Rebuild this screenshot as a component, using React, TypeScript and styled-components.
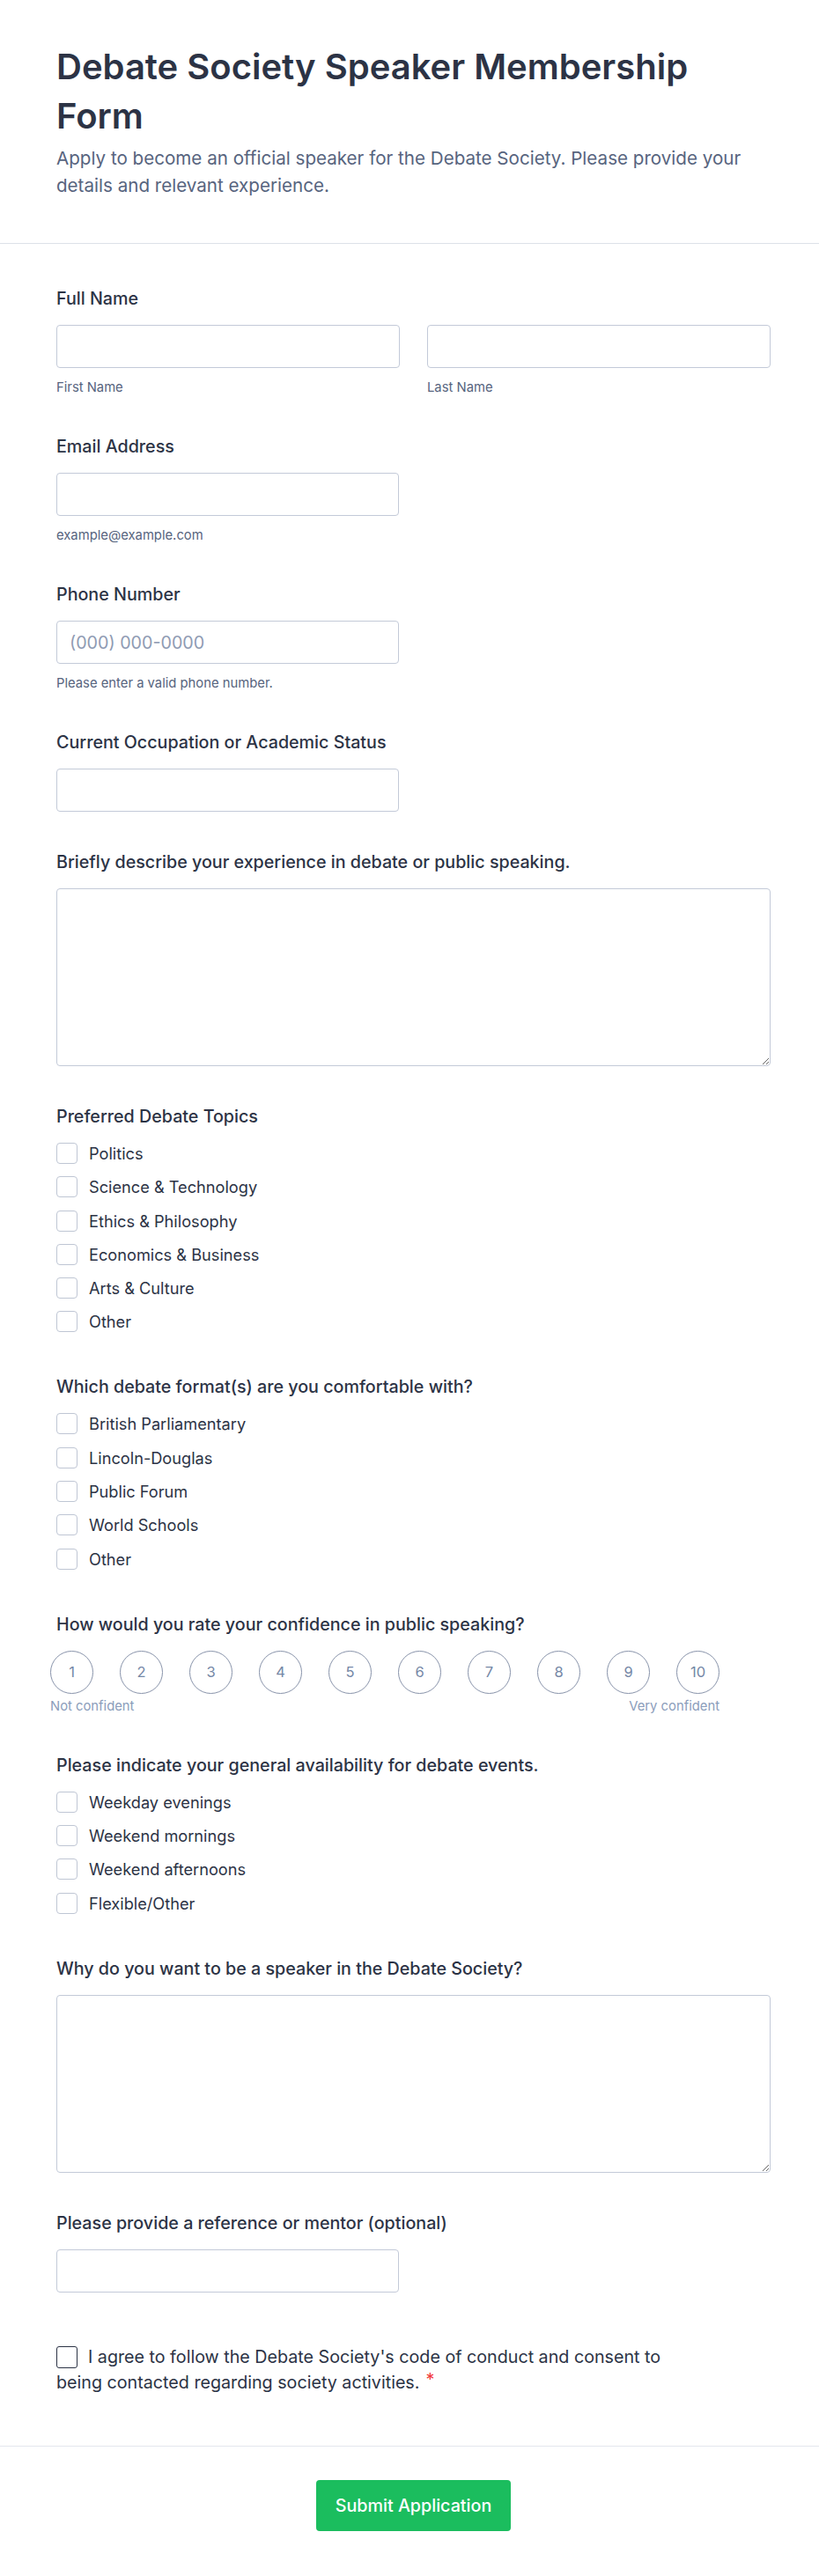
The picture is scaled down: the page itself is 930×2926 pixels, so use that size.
import React from "react";
import styled, { createGlobalStyle } from "styled-components";

const Global = createGlobalStyle`
  * { box-sizing: border-box; }
  html, body { margin: 0; padding: 0; background: #ffffff; }
  body {
    font-family: Inter, "Noto Sans", "Liberation Sans", sans-serif;
    color: #2c3345;
  }
`;

const Page = styled.div`
  width: 930px;
  display: flex;
  flex-direction: column;
  background: #ffffff;
`;

const Header = styled.header`
  padding: 48px 55px 50px 64px;
  border-bottom: 1px solid #dde1e8;
`;

const Title = styled.h1`
  margin: 0;
  font-size: 40px;
  line-height: 56px;
  font-weight: 600;
  color: #2c3345;
`;

const Subtitle = styled.p`
  margin: 4px 0 0;
  font-size: 20.6px;
  line-height: 31px;
  color: #57647e;
`;

const Body = styled.div`
  padding: 49px 55px 58px 64px;
  display: flex;
  flex-direction: column;
`;

const Field = styled.div<{ $extra?: number }>`
  margin-bottom: ${(p) => 44 + (p.$extra || 0)}px;
`;

const Label = styled.label`
  display: block;
  font-size: 19.7px;
  line-height: 27px;
  font-weight: 500;
  color: #2c3345;
  margin-bottom: 16px;
`;

const Pair = styled.div`
  display: grid;
  grid-template-columns: 1fr 1fr;
  column-gap: 31px;
`;

const TextInput = styled.input<{ $full?: boolean }>`
  display: block;
  width: ${(p) => (p.$full ? "100%" : "389px")};
  height: 49px;
  border: 1px solid #c3cad8;
  border-radius: 4px;
  padding: 0 14px;
  font-family: inherit;
  font-size: 19.7px;
  color: #2c3345;
  background: #fff;
  outline: none;
  &::placeholder {
    color: #8f9bb3;
  }
`;

const TextArea = styled.textarea`
  display: block;
  width: 100%;
  height: 202px;
  border: 1px solid #c3cad8;
  border-radius: 4px;
  padding: 10px 14px;
  font-family: inherit;
  font-size: 19.7px;
  resize: vertical;
  outline: none;
  background: #fff;
`;

const SubLabel = styled.div`
  margin-top: 12px;
  font-size: 14.8px;
  line-height: 20px;
  color: #57647e;
`;

const CheckList = styled.div`
  display: flex;
  flex-direction: column;
  gap: 14.3px;
  margin-top: 2px;
`;

const CheckItem = styled.label`
  display: flex;
  align-items: center;
  gap: 13px;
  font-size: 18.2px;
  line-height: 24px;
  color: #2c3345;
`;

const Box = styled.input.attrs({ type: "checkbox" })`
  appearance: none;
  -webkit-appearance: none;
  margin: 0;
  width: 24px;
  height: 24px;
  flex: none;
  border: 1px solid #bfc6d4;
  border-radius: 4px;
  background: #fff;
`;

const Rating = styled.div`
  margin-left: -7px;
  width: 760px;
`;

const Circles = styled.div`
  display: flex;
  gap: 30px;
`;

const Circle = styled.button`
  width: 49px;
  height: 49px;
  border-radius: 50%;
  border: 1px solid #8792a9;
  background: #fff;
  padding: 0;
  font-family: inherit;
  font-size: 16.5px;
  color: #7587a6;
  display: flex;
  align-items: center;
  justify-content: center;
`;

const Scale = styled.div`
  display: flex;
  justify-content: space-between;
  margin-top: 4px;
  font-size: 14.8px;
  line-height: 20px;
  color: #8b9dbb;
`;

const Agree = styled.p`
  margin: 16px 0 0;
  max-width: 720px;
  font-size: 19.7px;
  line-height: 26.7px;
  color: #2c3345;
`;

const AgreeBox = styled.input.attrs({ type: "checkbox" })`
  appearance: none;
  -webkit-appearance: none;
  margin: 0 12px 0 0;
  width: 24px;
  height: 25px;
  border: 1.5px solid #2c3345;
  border-radius: 3px;
  background: #fff;
  vertical-align: -6px;
`;

const Required = styled.span`
  color: #f23a3c;
  margin-left: 7px;
  vertical-align: 3px;
`;

const Footer = styled.footer`
  border-top: 1px solid #e3e6ed;
  padding: 38px 55px 50px 64px;
  display: flex;
  justify-content: center;
`;

const Submit = styled.button`
  width: 221px;
  height: 58px;
  border: none;
  border-radius: 4px;
  background: #1bbd5e;
  color: #ffffff;
  font-family: inherit;
  font-size: 19.7px;
  font-weight: 500;
`;

const topics = [
  "Politics",
  "Science & Technology",
  "Ethics & Philosophy",
  "Economics & Business",
  "Arts & Culture",
  "Other",
];

const formats = [
  "British Parliamentary",
  "Lincoln-Douglas",
  "Public Forum",
  "World Schools",
  "Other",
];

const availability = [
  "Weekday evenings",
  "Weekend mornings",
  "Weekend afternoons",
  "Flexible/Other",
];

function CheckGroup({ items }: { items: string[] }) {
  return (
    <CheckList>
      {items.map((t) => (
        <CheckItem key={t}>
          <Box />
          <span>{t}</span>
        </CheckItem>
      ))}
    </CheckList>
  );
}

export default function App() {
  return (
    <Page>
      <Global />
      <Header>
        <Title>Debate Society Speaker Membership Form</Title>
        <Subtitle>
          Apply to become an official speaker for the Debate Society. Please
          provide your details and relevant experience.
        </Subtitle>
      </Header>
      <Body>
        <Field>
          <Label>Full Name</Label>
          <Pair>
            <div>
              <TextInput $full />
              <SubLabel>First Name</SubLabel>
            </div>
            <div>
              <TextInput $full />
              <SubLabel>Last Name</SubLabel>
            </div>
          </Pair>
        </Field>
        <Field>
          <Label>Email Address</Label>
          <TextInput type="email" />
          <SubLabel>example@example.com</SubLabel>
        </Field>
        <Field>
          <Label>Phone Number</Label>
          <TextInput placeholder="(000) 000-0000" />
          <SubLabel>Please enter a valid phone number.</SubLabel>
        </Field>
        <Field>
          <Label>Current Occupation or Academic Status</Label>
          <TextInput />
        </Field>
        <Field>
          <Label>Briefly describe your experience in debate or public speaking.</Label>
          <TextArea />
        </Field>
        <Field $extra={5}>
          <Label>Preferred Debate Topics</Label>
          <CheckGroup items={topics} />
        </Field>
        <Field $extra={5}>
          <Label>Which debate format(s) are you comfortable with?</Label>
          <CheckGroup items={formats} />
        </Field>
        <Field>
          <Label>How would you rate your confidence in public speaking?</Label>
          <Rating>
            <Circles>
              {Array.from({ length: 10 }, (_, i) => (
                <Circle key={i} type="button">
                  {i + 1}
                </Circle>
              ))}
            </Circles>
            <Scale>
              <span>Not confident</span>
              <span>Very confident</span>
            </Scale>
          </Rating>
        </Field>
        <Field $extra={5}>
          <Label>Please indicate your general availability for debate events.</Label>
          <CheckGroup items={availability} />
        </Field>
        <Field>
          <Label>Why do you want to be a speaker in the Debate Society?</Label>
          <TextArea />
        </Field>
        <Field>
          <Label>Please provide a reference or mentor (optional)</Label>
          <TextInput />
        </Field>
        <Agree>
          <AgreeBox />I agree to follow the Debate Society's code of conduct and
          consent to being contacted regarding society activities.
          <Required>*</Required>
        </Agree>
      </Body>
      <Footer>
        <Submit type="button">Submit Application</Submit>
      </Footer>
    </Page>
  );
}
